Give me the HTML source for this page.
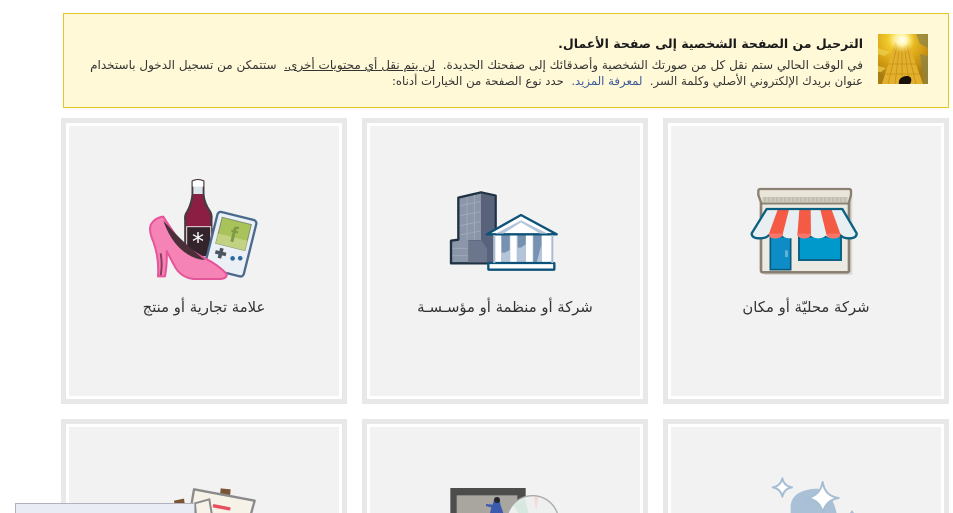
<!DOCTYPE html>
<html lang="ar" dir="rtl">
<head>
<meta charset="utf-8">
<title>Page</title>
<style>
html,body{margin:0;padding:0;background:#fff;width:953px;height:513px;overflow:hidden}
#w{position:absolute;left:0;top:0;width:953px;height:513px;overflow:hidden}
body{font-family:"DejaVu Sans","Liberation Sans",sans-serif;color:#333}
.notice{position:absolute;left:63px;top:13px;width:884px;height:93px;background:#fff9d7;border:1px solid #e2c822}
.t{position:absolute;white-space:nowrap;direction:rtl}
.title{right:90px;top:36px;font-size:12.5px;font-weight:bold;color:#1a1a1a;line-height:16px}
.l1,.l2{right:90px;line-height:16px;color:#333}
.l1{top:57px;font-size:12px}.l2{top:73px;font-size:11.7px}
a{color:#3b5998;text-decoration:none}
u{text-decoration:underline;color:#333}
.card{position:absolute;box-sizing:border-box;width:286px;border:5px solid #e8e8e8;background:#f2f2f2}
.card i{display:block;box-sizing:border-box;width:276px;height:100%;border:3px solid #fff;background:#f2f2f2}
.r1{top:118px;height:286px}
.r2{top:419px;height:94px;border-bottom:0}
.r2 i{border-bottom:0}
.lab{position:absolute;width:286px;text-align:center;font-size:14.8px;color:#333;line-height:18px}
svg.o{position:absolute;left:0;top:0}
.chat{position:absolute;left:15px;top:503px;width:178px;height:9px;background:#e9ecf5;border:1px solid #b0b3bb;border-bottom:0;overflow:hidden}
</style>
</head>
<body>
<div id="w">
<div class="notice"></div>
<svg class="o" style="left:878px;top:34px" width="50" height="50" viewBox="0 0 50 50">
<defs>
<radialGradient id="g" cx="40%" cy="10%" r="80%"><stop offset="0" stop-color="#fff8b8"/><stop offset=".25" stop-color="#f2cb2c"/><stop offset=".65" stop-color="#d59f14"/><stop offset="1" stop-color="#a97c12"/></radialGradient>
<radialGradient id="s" cx="50%" cy="50%" r="50%"><stop offset="0" stop-color="#fff"/><stop offset=".4" stop-color="#fff6b0"/><stop offset="1" stop-color="#ffe060" stop-opacity="0"/></radialGradient>
</defs>
<rect width="50" height="50" fill="url(#g)"/>
<path d="M38 0H50V14L42 10zM42 20L50 22V50H46z" fill="#8c8448" opacity=".7"/>
<path d="M0 14L12 18 6 22 0 20zM0 32L8 34 3 38 0 38z" fill="#f0cf50" opacity=".7"/>
<path d="M17 8L30 8 45 50H4z" fill="#e2b02a"/>
<path d="M10 50L20 8M17 50L22 8M24 50L24 8M31 50L26 8M38 50L28 8M8 40H42M10 30H38" stroke="#b9841a" stroke-width=".8" opacity=".7"/>
<circle cx="24" cy="6" r="13" fill="url(#s)"/>
<path d="M21 50C20 45 24 42 30 42 34 43 34 47 32 50z" fill="#1a1208"/>
</svg>
<div class="t title">الترحيل من الصفحة الشخصية إلى صفحة الأعمال.</div>
<div class="t l1">في الوقت الحالي ستم نقل كل من صورتك الشخصية وأصدقائك إلى صفحتك الجديدة.&nbsp; <u>لن يتم نقل أي محتويات أخرى.</u>&nbsp; ستتمكن من تسجيل الدخول باستخدام</div>
<div class="t l2">عنوان بريدك الإلكتروني الأصلي وكلمة السر.&nbsp; <a>لمعرفة المزيد.</a>&nbsp; حدد نوع الصفحة من الخيارات أدناه:</div>

<div class="card r1" style="left:663px"><i></i></div>
<div class="card r1" style="left:362px"><i></i></div>
<div class="card r1" style="left:61px"><i></i></div>
<div class="card r2" style="left:663px"><i></i></div>
<div class="card r2" style="left:362px"><i></i></div>
<div class="card r2" style="left:61px"><i></i></div>

<!-- shop icon -->
<svg class="o" style="left:745px;top:185px" width="120" height="95" viewBox="0 0 360 285">
<rect x="56" y="30" width="266" height="240" rx="6" fill="#d9d9d7"/>
<rect x="48" y="30" width="264" height="232" rx="5" fill="#ecebe3" stroke="#8a8172" stroke-width="8"/>
<path d="M49 55L40 30V18Q40 12 46 12H312Q318 12 318 18V30L311 55Z" fill="#e9e5d8" stroke="#8a8172" stroke-width="7" stroke-linejoin="round"/>
<rect x="52" y="36" width="256" height="17" fill="#cdc9bc"/>
<path d="M60 36v17M72 36v17M84 36v17M96 36v17M108 36v17M120 36v17M132 36v17M144 36v17M156 36v17M168 36v17M180 36v17M192 36v17M204 36v17M216 36v17M228 36v17M240 36v17M252 36v17M264 36v17M276 36v17M288 36v17M300 36v17" stroke="#b8b3a5" stroke-width="3"/>
<rect x="76" y="155" width="61" height="99" fill="#0e8cc6" stroke="#0b5a7d" stroke-width="5"/>
<rect x="120" y="196" width="9" height="20" fill="#5eb1d8"/>
<rect x="162" y="155" width="126" height="70" fill="#0099cc" stroke="#0c6184" stroke-width="6"/>
<path d="M65 72H292L335 145Q335 160 312 160 296 160 288 152 280 160 266 160 250 160 242 152 234 160 220 160 206 160 198 152 190 160 178 160 164 160 157 152 150 160 134 160 120 160 112 152 104 160 90 160 76 160 70 152 62 160 44 160 20 160 20 145Z" fill="#e7eff3"/>
<path d="M98 74H132L112 152Q104 160 90 160 76 160 70 152ZM163 74H197L198 152Q190 160 178 160 164 160 157 152ZM226 74H260L288 152Q280 160 266 160 250 160 245 152Z" fill="#f55a45"/>
<path d="M70 146H114V152Q104 160 90 160 76 160 70 152ZM157 146H198V152Q190 160 178 160 164 160 157 152ZM245 146H288V152Q280 160 266 160 250 160 245 152Z" fill="#f8766a"/>
<path d="M70 152Q62 160 44 160 20 160 20 145L65 72H292L335 145Q335 160 312 160 296 160 288 152" fill="none" stroke="#0b5f80" stroke-width="7" stroke-linejoin="round" stroke-linecap="round"/>
</svg>
<!-- building icon -->
<svg class="o" style="left:445px;top:185px" width="120" height="95" viewBox="0 0 360 285">
<path d="M40 38L108 22 152 32V235H18V167L40 164Z" fill="#8b96a9" stroke="#1e3242" stroke-width="7" stroke-linejoin="round"/>
<path d="M108 25L149 34V232H70V165H108Z" fill="#58637b"/>
<path d="M44 62L106 50M44 92L106 80M44 122L106 110M44 150L106 138M66 36V164M88 30V164M22 190H68M22 212H68" stroke="#a3acba" stroke-width="2.5"/>
<path d="M70 167H110L126 190V232H70Z" fill="#6b768c"/>
<path d="M145 148H325V235H145Z" fill="#fff"/>
<path d="M168 150H196V232H168ZM215 150H243V232H215ZM263 150H291V232H263Z" fill="#b4c5d9"/>
<path d="M170 148H194V195L180 203H170ZM218 148H242V178L228 188H218ZM265 148H289V180L275 232H265Z" fill="#7791b0"/>
<path d="M125 148L228 90 335 148Z" fill="#fff" stroke="#0d5278" stroke-width="7" stroke-linejoin="round"/>
<path d="M152 146L228 106 308 146H285L228 112 175 146Z" fill="#b4c5d9"/>
<rect x="130" y="234" width="198" height="20" rx="2" fill="#fff" stroke="#0d5278" stroke-width="7" stroke-linejoin="round"/>
<path d="M148 150V234M322 150V234" stroke="#a9bbcf" stroke-width="6"/>
</svg>
<!-- brand icon -->
<svg class="o" style="left:130px;top:170px" width="150" height="115" viewBox="0 0 450 345">
<path d="M188 34Q204 26 220 34V72Q222 100 240 125 246 135 244 150V270H166V150Q164 135 172 125 186 100 188 72Z" fill="#8c1e44" stroke="#4a3a40" stroke-width="7" stroke-linejoin="round"/>
<path d="M190 40H218V72H190Z" fill="#d8e6ea"/>
<path d="M188 34Q204 26 220 34V50H188Z" fill="#fff"/>
<rect x="170" y="170" width="72" height="90" fill="#33242c" stroke="#e9dfe0" stroke-width="3"/>
<text x="204" y="240" font-size="72" fill="#fff" text-anchor="middle" direction="ltr" font-family="DejaVu Sans">*</text>
<g transform="rotate(14 300 222)">
<rect x="242" y="135" width="120" height="174" rx="10" fill="#eaf0f5" stroke="#4a6a8c" stroke-width="7"/>
<rect x="258" y="150" width="90" height="80" fill="#a9c25a" stroke="#7f8f70" stroke-width="3"/>
<rect x="258" y="200" width="90" height="30" fill="#c3d282"/>
<text x="304" y="214" font-size="66" font-weight="bold" fill="#7f9a44" text-anchor="middle" direction="ltr" font-family="Liberation Sans">f</text>
<path d="M263 250h11v-10h11v10h11v11h-11v10h-11v-10h-11z" fill="#4a5560"/>
<circle cx="318" cy="262" r="7" fill="#2f6ba0"/><circle cx="340" cy="256" r="7" fill="#2f6ba0"/>
</g>
<path d="M62 165Q75 142 100 140 112 160 140 200 170 238 225 265 265 285 290 312 292 326 270 327H190Q150 322 132 285L110 243Q112 280 105 319H84Q88 265 70 215 56 185 62 165Z" fill="#f583b5" stroke="#e6549a" stroke-width="6" stroke-linejoin="round"/>
<path d="M100 152Q118 205 150 235 185 268 225 270 165 225 100 152Z" fill="#4a2e38"/>
<path d="M92 250Q98 285 92 316" stroke="#8c3a5e" stroke-width="6" fill="none"/>
</svg>

<div class="lab" style="left:663px;top:299px">شركة محليّة أو مكان</div>
<div class="lab" style="left:362px;top:299px">شركة أو منظمة أو مؤسـسـة</div>
<div class="lab" style="left:61px;top:299px">علامة تجارية أو منتج</div>

<!-- row 2 partial icons -->
<svg class="o" style="left:650px;top:410px" width="303" height="103" viewBox="0 0 909 309">
<path d="M422 310V285Q428 240 500 236 545 240 560 310Z" fill="#a9c0d6"/>
<path d="M397 205Q402 228 426 232 402 236 397 260 392 236 368 232 392 228 397 205Z" fill="#fff" stroke="#a6bdd4" stroke-width="6" stroke-linejoin="round"/>
<path d="M518 216Q524 258 566 264 528 270 518 308 510 270 470 264 510 258 518 216Z" fill="#fff" stroke="#a6bdd4" stroke-width="6" stroke-linejoin="round"/>
<path d="M606 300L600 309H612Z" fill="#a6bdd4"/>
</svg>
<svg class="o" style="left:350px;top:410px" width="320" height="103" viewBox="0 0 960 309">
<rect x="301" y="234" width="226" height="75" fill="#4d4d4b"/>
<rect x="320" y="256" width="182" height="53" fill="#a9a6a0"/>
<path d="M408 282L428 284 434 262 448 262 452 286 460 309H420L424 292 408 288Z" fill="#3b5cae"/>
<circle cx="441" cy="270" r="9" fill="#262626"/>
<circle cx="548" cy="335" r="78" fill="#eef0ef" stroke="#a9a9a9" stroke-width="4"/>
<path d="M490 285L525 265 535 309H505Z" fill="#d6e8e0"/>
<path d="M552 260L565 262 558 300Z" fill="#f5d8da"/>
</svg>
<svg class="o" style="left:0;top:410px" width="320" height="103" viewBox="0 0 960 309">
<path d="M522 272L552 266 556 295 526 300Z" fill="#7a5534"/>
<path d="M662 235L692 238 690 260 660 256Z" fill="#7a5534"/>
<path d="M582 238L764 272 745 340 565 340Z" fill="#f6f2e8" stroke="#8b8b8b" stroke-width="7" stroke-linejoin="round"/>
<path d="M640 282L692 292 690 302 638 292Z" fill="#e64f5c"/>
<path d="M585 280L628 268 640 340H590Z" fill="#f6f2e8" stroke="#8b8b8b" stroke-width="6"/>
</svg>
<div class="chat"></div>
</div>
</body>
</html>
